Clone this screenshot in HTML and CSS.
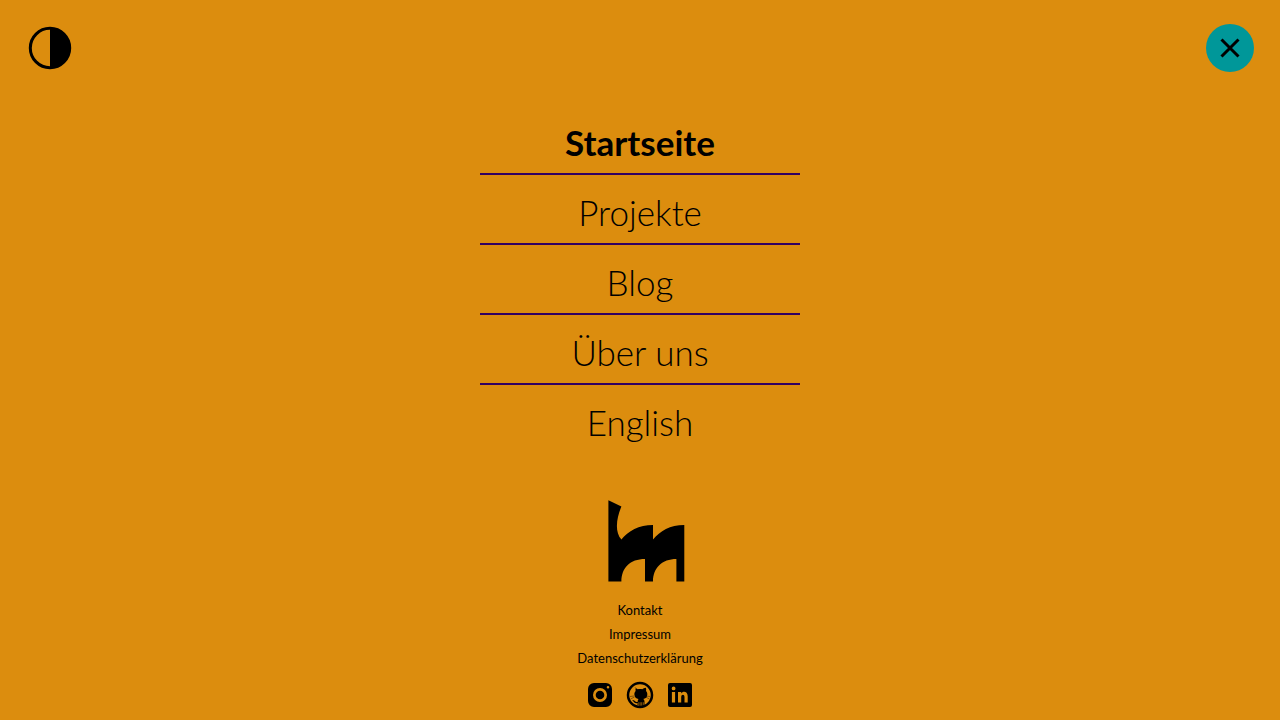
FILE: index.html
```
<!DOCTYPE html>
<html lang="de">
<head>
<meta charset="utf-8">
<meta name="viewport" content="width=device-width, initial-scale=1">
<title>Startseite</title>
<link rel="stylesheet" href="styles.css">
</head>
<body>
<header class="topbar">
  <button class="contrast" type="button" aria-label="Kontrast umschalten">
    <svg viewBox="0 0 44 44" width="44" height="44" aria-hidden="true"><circle cx="22" cy="22" r="19.7" fill="none" stroke="currentColor" stroke-width="3"/><path d="M22 2a20 20 0 0 1 0 40z"/></svg>
  </button>
  <button class="close" type="button" aria-label="Menü schließen">
    <svg viewBox="0 0 24 24" width="24" height="24" aria-hidden="true"><path d="M3.500 3.500l17 17M20.500 3.500l-17 17" fill="none" stroke="currentColor" stroke-width="3"/></svg>
  </button>
</header>
<nav class="menu" aria-label="Hauptmenü">
  <a class="menu-link current" href="#" aria-current="page">Startseite</a>
  <a class="menu-link" href="#">Projekte</a>
  <a class="menu-link" href="#">Blog</a>
  <a class="menu-link" href="#">Über uns</a>
  <a class="menu-link" href="#">English</a>
</nav>
<footer class="footer">
  <svg class="logo" viewBox="0 0 96 82" width="96" height="82" aria-hidden="true"><path d="M16.400 .3L29.400 6.500C25 17 22 31 29.400 39.500C36 31 47 25 61 25V39.500C68 31 78 25 92.300 25V81.500H84.400V59C70 59 61 68 61 81.500H53V59C38 59 29.400 68 29.400 81.500H16.400z"/></svg>
  <div class="legal">
    <a href="#">Kontakt</a>
    <a href="#">Impressum</a>
    <a href="#">Datenschutzerklärung</a>
  </div>
  <div class="social">
    <a href="#" aria-label="Instagram">
      <svg viewBox="0 0 28 28" width="28" height="28" aria-hidden="true"><path fill-rule="evenodd" d="M8 2h12a6 6 0 0 1 6 6v12a6 6 0 0 1-6 6H8a6 6 0 0 1-6-6V8a6 6 0 0 1 6-6zm6 5a7 7 0 1 0 0 14 7 7 0 0 0 0-14zM22 5a1.300 1.300 0 1 0 0 2.600A1.300 1.300 0 0 0 22 5z"/><circle cx="14" cy="14" r="4.300"/></svg>
    </a>
    <a href="#" aria-label="GitHub">
      <svg viewBox="0 0 28 28" width="28" height="28" aria-hidden="true"><circle cx="14" cy="14" r="12" fill="none" stroke="currentColor" stroke-width="2.500"/><path d="M8.200 6.700c1.500.1 2.600.9 3.500 1.600 1.500-.3 3.100-.3 4.600 0 .9-.7 2-1.500 3.500-1.600.5 1.200.5 2.300.2 3.200 1 1.100 1.500 2.300 1.300 3.900-.3 2.700-1.700 3.800-4.100 4.300 1 .8 1.300 1.700 1.300 2.900v3.500h-1v-3.200h-.7v4h-1.300v-4h-.9v4h-1.300v-4h-.7v3.200h-1.100v-2.500c-2 .5-3.100-.1-3.800-1.300-.4-.7-.9-1-1.600-1.300 1.700-.5 2.400.2 3 .9.700.8 1.500.9 2.500.6 0-1.200.3-2.100.9-2.800-2.400-.5-3.800-1.600-4.100-4.300-.2-1.600.3-2.800 1.300-3.900-.3-.9-.3-2 .2-3.200z"/><path d="M4 15.500l4-.5M4.500 18l4-2M20 15l4 .5M19.500 16l4 2" fill="none" stroke="currentColor" stroke-width=".4"/></svg>
    </a>
    <a href="#" aria-label="LinkedIn">
      <svg viewBox="0 0 28 28" width="28" height="28" aria-hidden="true"><path fill-rule="evenodd" d="M4 2h20a2 2 0 0 1 2 2v20a2 2 0 0 1-2 2H4a2 2 0 0 1-2-2V4a2 2 0 0 1 2-2zm3.600 3.500a1.900 1.900 0 1 0 0 3.800 1.900 1.900 0 0 0 0-3.800zM5.900 11v10.500h3.200V11zM12 11v10.500h3.200v-5.300c0-3.200 3.300-3.200 3.300-.3v5.600h3.200v-6.200c0-5.200-4.900-5.400-6.500-2.800V11z"/></svg>
    </a>
  </div>
</footer>
</body>
</html>
```
FILE: styles.css
```
* { box-sizing: border-box; }

body {
  margin: 0;
  min-height: 100vh;
  background: #dc8d0e;
  color: #000;
  font-family: Lato, "Liberation Sans", sans-serif;
  font-weight: 300;
}

a { color: inherit; text-decoration: none; }
svg { display: block; fill: currentColor; }

.topbar {
  display: flex;
  align-items: center;
  justify-content: space-between;
  padding: 24px 26px 0;
}

.contrast,
.close {
  display: grid;
  place-items: center;
  width: 48px;
  height: 48px;
  padding: 0;
  border: 0;
  border-radius: 50%;
  background: none;
  color: inherit;
  cursor: pointer;
}

.close { background: #009799; }

.menu {
  width: 100%;
  max-width: 320px;
  margin: 33px auto 0;
}

.menu-link {
  display: block;
  padding: 7px 0 1px;
  font-size: 35px;
  line-height: 60px;
  text-align: center;
}

.menu-link + .menu-link { border-top: 2px solid #310062; }
.current { font-weight: 700; }

.footer {
  display: flex;
  flex-direction: column;
  align-items: center;
  gap: 16px;
  padding: 47px 0 11px;
}

.legal {
  display: flex;
  flex-direction: column;
  align-items: center;
  font-size: 13px;
  font-weight: 400;
  line-height: 24px;
}

.social {
  display: flex;
  gap: 12px;
  margin-top: -5px;
}
```
